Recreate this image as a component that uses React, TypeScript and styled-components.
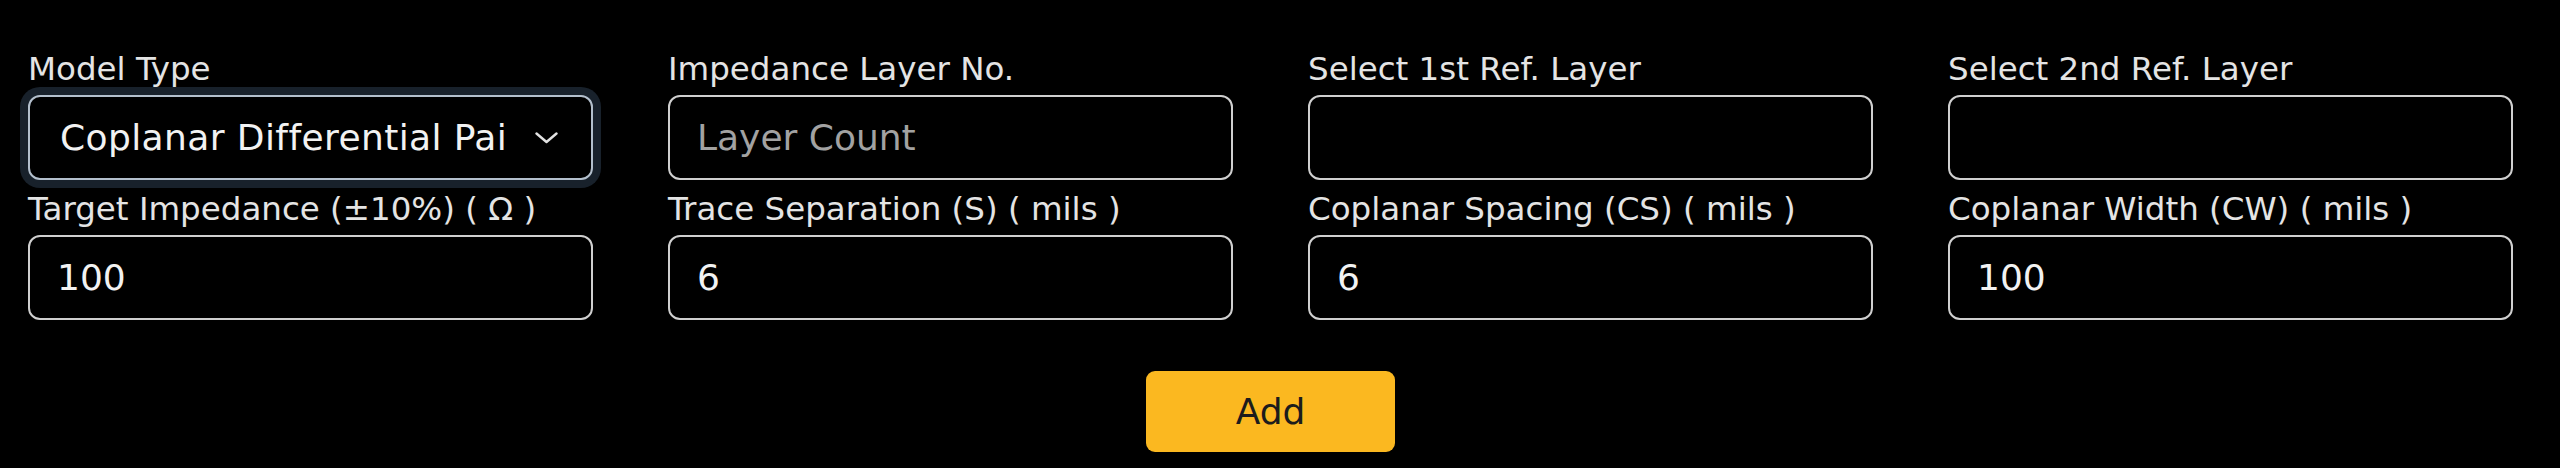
import styled, { createGlobalStyle } from "styled-components";

const GlobalStyle = createGlobalStyle`
  html, body {
    margin: 0;
    padding: 0;
    background: #000;
  }
  body {
    font-family: "DejaVu Sans", "Liberation Sans", sans-serif;
  }
  * {
    box-sizing: border-box;
  }
`;

interface FieldConfig {
  label: string;
  value?: string;
  placeholder?: string;
}

const fields: FieldConfig[] = [
  { label: "Impedance Layer No.", placeholder: "Layer Count" },
  { label: "Select 1st Ref. Layer" },
  { label: "Select 2nd Ref. Layer" },
  { label: "Target Impedance (±10%) ( Ω )", value: "100" },
  { label: "Trace Separation (S) ( mils )", value: "6" },
  { label: "Coplanar Spacing (CS) ( mils )", value: "6" },
  { label: "Coplanar Width (CW) ( mils )", value: "100" },
];

const ChevronDown = () => (
  <svg width="23" height="12" viewBox="0 0 23 12" fill="none">
    <polyline
      points="1.5,1.5 11.5,10 21.5,1.5"
      stroke="#e2e2e2"
      strokeWidth="2.4"
      strokeLinecap="round"
      strokeLinejoin="round"
    />
  </svg>
);

const App = () => {
  return (
    <Wrapper>
      <GlobalStyle />
      <FormGrid>
        <Field>
          <Label>Model Type</Label>
          <SelectBox>
            <SelectValue>Coplanar Differential Pair</SelectValue>
            <ChevronDown />
          </SelectBox>
        </Field>
        {fields.map((item, index) => (
          <Field key={index}>
            <Label>{item.label}</Label>
            <TextInput
              type="text"
              defaultValue={item.value}
              placeholder={item.placeholder}
            />
          </Field>
        ))}
      </FormGrid>
      <Actions>
        <AddButton type="button">Add</AddButton>
      </Actions>
    </Wrapper>
  );
};

const Wrapper = styled.div`
  width: 2560px;
  height: 468px;
  padding: 50px 47px 0px 28px;
  background: #000;
  overflow: hidden;
`;

const FormGrid = styled.div`
  display: grid;
  grid-template-columns: repeat(4, 1fr);
  column-gap: 75px;
  row-gap: 10px;
`;

const Field = styled.div`
  display: flex;
  flex-direction: column;
  gap: 7px;
`;

const Label = styled.label`
  font-size: 32.5px;
  line-height: 38px;
  color: #e4e4e4;
  white-space: nowrap;
`;

const TextInput = styled.input`
  width: 100%;
  height: 85px;
  padding: 0px 27px;
  border: 2px solid #cfcfcf;
  border-radius: 12px;
  background: #000;
  color: #f2f2f2;
  font-family: inherit;
  font-size: 36px;
  outline: none;

  &::placeholder {
    color: #a2a2a2;
  }
`;

const SelectBox = styled.div`
  display: flex;
  align-items: center;
  justify-content: space-between;
  width: 100%;
  height: 85px;
  padding: 0px 33px 0px 30px;
  border: 2px solid #b3bfcc;
  border-radius: 12px;
  background: #000;
  box-shadow: 0px 0px 0px 8px #18212b;
  color: #f2f2f2;
  font-size: 36px;
  cursor: pointer;
`;

const SelectValue = styled.span`
  flex: 0 0 446px;
  overflow: hidden;
  white-space: nowrap;
  letter-spacing: 0.4px;
`;

const Actions = styled.div`
  display: flex;
  justify-content: center;
  margin-top: 51px;
`;

const AddButton = styled.button`
  width: 249px;
  height: 81px;
  border: none;
  border-radius: 9px;
  background: #fbb820;
  color: #1c1c1c;
  font-family: inherit;
  font-size: 36px;
  cursor: pointer;
`;

export default App;
